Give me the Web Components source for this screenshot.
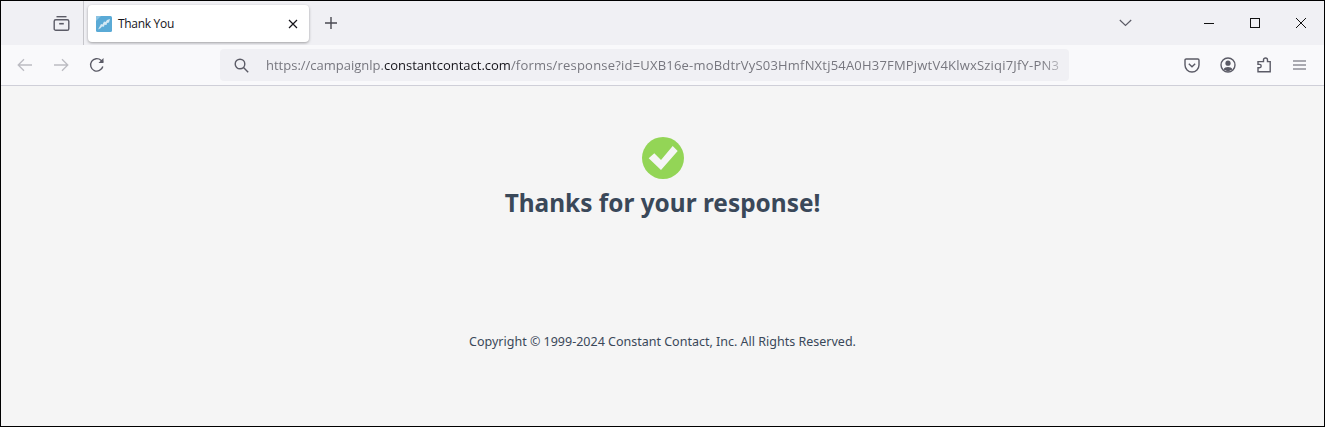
<!DOCTYPE html>
<html lang="en">
<head>
<meta charset="utf-8">
<title>Thank You</title>
<style>
  html, body { margin: 0; height: 100%; background: #f5f5f5; }
  body { font-family: "Open Sans", "Liberation Sans", sans-serif; }
</style>
</head>
<body>
<browser-window>
  <tab-strip title-text="Thank You"></tab-strip>
  <nav-toolbar></nav-toolbar>
  <thanks-page>
    <span slot="heading">Thanks for your response!</span>
    <span slot="footer">Copyright © 1999-2024 Constant Contact, Inc. All Rights Reserved.</span>
  </thanks-page>
</browser-window>

<script>
class BrowserWindow extends HTMLElement {
  constructor() {
    super();
    this.attachShadow({ mode: 'open' });
    this.shadowRoot.innerHTML = `
      <style>
        :host {
          display: flex;
          flex-direction: column;
          box-sizing: border-box;
          width: 1325px;
          height: 427px;
          border: 1px solid #000;
          overflow: hidden;
          background: #f5f5f5;
        }
      </style>
      <slot></slot>
    `;
  }
}

class TabStrip extends HTMLElement {
  constructor() {
    super();
    this.attachShadow({ mode: 'open' });
    this.shadowRoot.innerHTML = `
      <style>
        :host {
          display: flex;
          align-items: flex-start;
          flex: none;
          height: 44px;
          background: #f0f0f4;
          color: #15141a;
        }
        svg { display: block; fill: none; stroke: currentColor; }
        .views {
          box-sizing: border-box;
          display: flex;
          align-items: center;
          justify-content: center;
          width: 83px;
          height: 44px;
          padding-left: 39px;
          border-right: 1px solid #c6c6cb;
          color: #5b5b66;
        }
        .tab {
          box-sizing: border-box;
          display: flex;
          align-items: center;
          width: 221px;
          height: 37px;
          margin: 4px 1px 0 4px;
          padding: 0 10px 0 8px;
          background: #fff;
          border-radius: 4px;
          box-shadow: 0 1px 3px rgba(0, 0, 0, 0.35);
        }
        .favicon { flex: none; width: 16px; height: 16px; margin-right: 6px; }
        .label {
          flex: 1;
          font: 12px "Open Sans", "Liberation Sans", sans-serif;
          letter-spacing: -0.3px;
          white-space: nowrap;
        }
        .add { margin: 15px 0 0 14px; color: #4a4a52; }
        .spacer { flex: 1; }
        .list { margin: 17px 72px 0 0; color: #5b5b66; }
        .win { display: flex; margin-top: 17px; padding-right: 18px; gap: 36px; color: #111; }
      </style>
      <div class="views">
        <svg width="17" height="17" viewBox="0 0 17 17" stroke-width="1.4">
          <path d="M3.5 1.7h10"/>
          <rect x="1.2" y="4.7" width="14.6" height="10.600" rx="1.6"/>
          <path d="M6.2 8.7h4.6" stroke-width="1.6"/>
        </svg>
      </div>
      <div class="tab">
        <svg class="favicon" viewBox="0 0 16 16" style="stroke:none">
          <rect width="16" height="16" rx="1.5" fill="#5aaad6"/>
          <path d="M0 0h5L0 5z" fill="#8cc4e3"/>
          <path d="M2 13.500 4 10l1-2 1.500.5L8 5.500l1.500.5L11 4l3-1-1 3.500-2 .5-.5 2-2-.2-.5 2-2-.2-1.500 1.700z" fill="#d5e9f4"/>
        </svg>
        <span class="label"></span>
        <svg width="12" height="12" viewBox="0 0 12 12" stroke-width="1.2">
          <path d="M2 2l8 8M10 2l-8 8"/>
        </svg>
      </div>
      <svg class="add" width="14" height="14" viewBox="0 0 14 14" stroke-width="1.4">
        <path d="M7 1v12M1 7h12"/>
      </svg>
      <div class="spacer"></div>
      <svg class="list" width="13" height="10" viewBox="0 0 13 10" stroke-width="1.2">
        <path d="M.8 2l5.700 5.500L12.200 2"/>
      </svg>
      <div class="win">
        <svg width="10" height="10" viewBox="0 0 10 10" stroke-width="1"><path d="M0 5.500h10"/></svg>
        <svg width="10" height="10" viewBox="0 0 10 10" stroke-width="1"><rect x=".5" y=".5" width="9" height="9"/></svg>
        <svg width="10" height="10" viewBox="0 0 10 10" stroke-width="1"><path d="M0 0l10 10M10 0L0 10"/></svg>
      </div>
    `;
  }

  connectedCallback() {
    this.shadowRoot.querySelector('.label').textContent = this.getAttribute('title-text');
  }
}

class NavToolbar extends HTMLElement {
  constructor() {
    super();
    this.attachShadow({ mode: 'open' });
    this.shadowRoot.innerHTML = `
      <style>
        :host {
          display: flex;
          align-items: center;
          flex: none;
          box-sizing: border-box;
          height: 41px;
          background: #f9f9fb;
          border-bottom: 1px solid #cfcfd8;
          color: #5b5b66;
        }
        svg { display: block; flex: none; fill: none; stroke: currentColor; }
        .nav { display: flex; align-items: center; gap: 20px; margin-left: 16px; }
        .off { color: #bcbcc2; }
        .urlbar {
          box-sizing: border-box;
          display: flex;
          align-items: center;
          width: 849px;
          height: 32px;
          margin: 0 0 0 115px;
          padding: 0 4px 0 14px;
          background: #f0f0f4;
          border-radius: 4px;
        }
        .url {
          flex: 1;
          min-width: 0;
          margin-left: 17px;
          white-space: nowrap;
          font: 13px "Open Sans", "Liberation Sans", sans-serif;
          color: #77777f;
          -webkit-mask-image: linear-gradient(to right, #000 97%, rgba(0, 0, 0, 0.25));
          mask-image: linear-gradient(to right, #000 97%, rgba(0, 0, 0, 0.25));
        }
        .url b { font-weight: 400; color: #15141a; }
        .url i { font-style: normal; letter-spacing: 0.2px; }
        .actions { display: flex; align-items: center; gap: 20px; margin-left: 115px; }
      </style>
      <div class="nav">
        <svg class="off" width="16" height="14" viewBox="0 0 16 14" stroke-width="1.3">
          <path d="M15 7H1.500M7 1.200L1.200 7 7 12.800"/>
        </svg>
        <svg class="off" width="16" height="14" viewBox="0 0 16 14" stroke-width="1.3">
          <path d="M1 7h13.500M9 1.200L14.800 7 9 12.800"/>
        </svg>
        <svg width="16" height="16" viewBox="0 0 16 16" stroke-width="1.4">
          <path d="M13.800 9.500A6.200 6.200 0 1 1 12 3.300L14 5"/>
          <path d="M14.500 1v5h-5z" fill="currentColor" stroke="none"/>
        </svg>
      </div>
      <div class="urlbar">
        <svg width="15" height="15" viewBox="0 0 15 15" stroke-width="1.4">
          <circle cx="6" cy="6" r="4.800"/>
          <path d="M9.500 9.500l4.700 4.700"/>
        </svg>
        <div class="url">https://campaignlp.<b>constantcontact.com</b><i>/forms/response?id=UXB16e-moBdtrVyS03HmfNXtj54A0H37FMPjwtV4KlwxSziqi7JfY-PN3</i></div>
      </div>
      <div class="actions">
        <svg width="16" height="15" viewBox="0 0 16 15" stroke-width="1.4">
          <path d="M2.200 1h11.600c.7 0 1.200.5 1.200 1.200v4.800a7 7 0 0 1-14 0V2.200C1 1.500 1.500 1 2.200 1z"/>
          <path d="M4.800 5.800L8 8.800l3.200-3"/>
        </svg>
        <svg width="16" height="16" viewBox="0 0 16 16" stroke-width="1.4">
          <circle cx="8" cy="8" r="7"/>
          <circle cx="8" cy="6.200" r="2.600" fill="currentColor" stroke="none"/>
          <path d="M3.500 12.500c.8-2 2.500-2.600 4.500-2.600s3.700.6 4.500 2.600L8 14.500z" fill="currentColor" stroke="none"/>
        </svg>
        <svg width="15" height="16" viewBox="0 0 15 16" stroke-width="1.4" style="margin-left:1px">
          <path d="M1 14.800v-4h1.500a1.700 1.700 0 0 0 0-3.400H1V4.600h5.500V3a2 2 0 0 1 4 0v1.600h2.700v10.200z"/>
        </svg>
        <svg width="13" height="10" viewBox="0 0 13 10" stroke-width="1.2" style="margin-left:1px">
          <path d="M0 1h13M0 5h13M0 9h13"/>
        </svg>
      </div>
    `;
  }
}

class ThanksPage extends HTMLElement {
  constructor() {
    super();
    this.attachShadow({ mode: 'open' });
    this.shadowRoot.innerHTML = `
      <style>
        :host {
          display: flex;
          flex-direction: column;
          align-items: center;
          flex: 1;
          min-height: 0;
          padding-top: 51px;
          background: #f5f5f5;
          color: #3a4859;
          font-family: "Noto Sans", "Open Sans", sans-serif;
        }
        svg { display: block; }
        .heading {
          margin-top: 7px;
          font-size: 24.4px;
          line-height: 33px;
          font-weight: 700;
          white-space: nowrap;
        }
        .footer {
          margin-top: 114px;
          font-size: 12.5px;
          line-height: 17px;
          white-space: nowrap;
        }
      </style>
      <svg width="42" height="42" viewBox="0 0 42 42">
        <circle cx="21" cy="21" r="21" fill="#93d556"/>
        <path d="M6.700 21.300l5.600-5 6.700 6.700L30.700 9l5 5L19 33z" fill="#f5f5f5"/>
      </svg>
      <div class="heading"><slot name="heading"></slot></div>
      <div class="footer"><slot name="footer"></slot></div>
    `;
  }
}

customElements.define('browser-window', BrowserWindow);
customElements.define('tab-strip', TabStrip);
customElements.define('nav-toolbar', NavToolbar);
customElements.define('thanks-page', ThanksPage);
</script>
</body>
</html>
